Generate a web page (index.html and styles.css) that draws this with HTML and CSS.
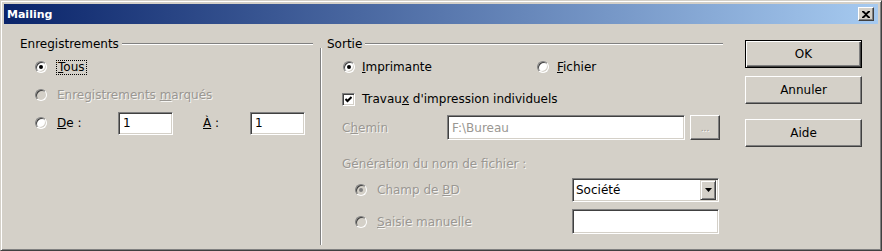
FILE: index.html
```html
<!DOCTYPE html>
<html lang="fr">
<head>
  <meta charset="UTF-8">
  <title>Mailing</title>
  <link rel="stylesheet" href="styles.css">
</head>
<body>

  <div class="window">
    <div class="titlebar">
      <span class="title">Mailing</span>
      <span class="close-btn">
        <svg width="8" height="7" viewBox="0 0 8 7"><path d="M0 0h2l2 2 2-2h2v1L5 3.5 8 6v1H6L4 5 2 7H0V6l3-2.5L0 1z" fill="#000"/></svg>
      </span>
    </div>

    <div class="dialog">

      <div class="group group-records">
        <div class="legend"><span>Enregistrements</span><span class="legend-line"></span></div>

        <div class="row row-first">
          <span class="radio checked"></span>
          <span class="focus"><u>T</u>ous</span>
        </div>
        <div class="row disabled">
          <span class="radio"></span>
          <span>Enregistrements <u>m</u>arqués</span>
        </div>
        <div class="row row-range">
          <span class="radio"></span>
          <span class="lbl-from"><u>D</u>e :</span>
          <input class="field field-range" type="text" value="1">
          <span class="lbl-to"><u>À</u> :</span>
          <input class="field field-range" type="text" value="1">
        </div>
      </div>

      <div class="vsep"></div>

      <div class="group group-output">
        <div class="legend"><span>Sortie</span><span class="legend-line"></span></div>

        <div class="row row-first">
          <span class="option-printer">
            <span class="radio checked"></span>
            <span><u>I</u>mprimante</span>
          </span>
          <span class="radio radio-file"></span>
          <span><u>F</u>ichier</span>
        </div>

        <div class="row row-check">
          <span class="checkbox">
            <svg width="7" height="7" viewBox="0 0 7 7"><path d="M0.5 3 L2.5 5 L6.5 1" stroke="#000" stroke-width="2" fill="none"/></svg>
          </span>
          <span>Travau<u>x</u> d'impression individuels</span>
        </div>

        <div class="row row-path disabled">
          <span class="lbl-path">C<u>h</u>emin</span>
          <input class="field field-path" type="text" value="F:\Bureau" disabled>
          <button class="btn btn-browse" disabled>...</button>
        </div>

        <div class="gen-label disabled">Génération du nom de fichier :</div>

        <div class="row row-db">
          <span class="radio checked"></span>
          <span class="lbl-opt disabled">Champ de <u>B</u>D</span>
          <div class="field select">
            <span class="select-text">Société</span>
            <span class="select-arrow">
              <svg width="7" height="4" viewBox="0 0 7 4"><path d="M0 0h7L3.5 4z" fill="#000"/></svg>
            </span>
          </div>
        </div>

        <div class="row row-manual">
          <span class="radio"></span>
          <span class="lbl-opt disabled"><u>S</u>aisie manuelle</span>
          <input class="field field-manual" type="text" value="">
        </div>
      </div>

      <div class="buttons">
        <button class="btn btn-default">OK</button>
        <button class="btn btn-cancel">Annuler</button>
        <button class="btn btn-help">Aide</button>
      </div>

    </div>
  </div>

</body>
</html>
```

FILE: styles.css
```css
* {
  box-sizing: border-box;
}

body {
  margin: 0;
  font-family: "DejaVu Sans", sans-serif;
  font-size: 12px;
  color: #000;
  background: #d4d0c8;
}

.window {
  width: 882px;
  height: 251px;
  padding: 3px;
  background: #d4d0c8;
  border: 1px solid;
  border-color: #d4d0c8 #404040 #404040 #d4d0c8;
  box-shadow: inset 1px 1px #fff, inset -1px -1px #808080;
}

/* title bar */
.titlebar {
  height: 20px;
  display: flex;
  align-items: center;
  justify-content: space-between;
  padding: 0 4px 0 3px;
  background: linear-gradient(to right, #0a246a, #a6caf0);
}

.title {
  color: #fff;
  font-weight: bold;
  font-size: 11px;
}

.close-btn {
  width: 16px;
  height: 14px;
  display: flex;
  align-items: center;
  justify-content: center;
  background: #d4d0c8;
  border: 1px solid;
  border-color: #fff #404040 #404040 #fff;
  box-shadow: inset -1px -1px #808080;
}

/* dialog body */
.dialog {
  display: flex;
  height: 223px;
}

.group {
  padding-top: 13px;
}

.group-records {
  width: 309px;
  padding-left: 16px;
}

.group-output {
  width: 396px;
}

.legend {
  display: flex;
  align-items: center;
  height: 14px;
  line-height: 14px;
}

.legend-line {
  flex: 1;
  height: 2px;
  margin-left: 3px;
  border-top: 1px solid #808080;
  border-bottom: 1px solid #fff;
}

.vsep {
  width: 2px;
  margin: 24px 5px 2px 7px;
  border-left: 1px solid #808080;
  border-right: 1px solid #fff;
}

.row {
  display: flex;
  align-items: center;
  height: 28px;
}

.row-first {
  margin-top: 2px;
}

.disabled,
.disabled u {
  color: #9a9792;
  text-shadow: 1px 1px 0 rgba(255, 255, 255, 0.8);
}

/* radio + checkbox */
.radio {
  position: relative;
  flex: none;
  width: 12px;
  height: 12px;
  border-radius: 50%;
  background: #fff;
  border: 1px solid;
  border-color: #808080 #fff #fff #808080;
  box-shadow: inset 1px 1px #404040, inset -1px -1px #d4d0c8;
}

.radio.checked::after {
  content: "";
  position: absolute;
  left: 3px;
  top: 3px;
  width: 4px;
  height: 4px;
  border-radius: 50%;
  background: #000;
}

.disabled .radio,
.row-db .radio,
.row-manual .radio {
  background: #d4d0c8;
}

.row-db .radio.checked::after {
  background: #808080;
}

.group-records .radio {
  margin: 0 10px 0 15px;
}

.focus {
  margin-left: -1px;
  padding: 0 1px;
  border: 1px dotted #000;
  line-height: 13px;
}

.checkbox {
  flex: none;
  width: 13px;
  height: 13px;
  margin: 0 7px 0 15px;
  display: flex;
  align-items: center;
  justify-content: center;
  background: #fff;
  border: 1px solid;
  border-color: #808080 #fff #fff #808080;
  box-shadow: inset 1px 1px #404040, inset -1px -1px #d4d0c8;
}

/* fields */
.field {
  height: 23px;
  padding: 0 4px;
  font: inherit;
  color: #000;
  background: #fff;
  border: 1px solid;
  border-color: #808080 #fff #fff #808080;
  box-shadow: inset 1px 1px #404040, inset -1px -1px #d4d0c8;
  outline: none;
}

.lbl-from {
  width: 61px;
}

.field-range {
  width: 55px;
}

.lbl-to {
  width: 47px;
  margin-left: 30px;
}

/* output group */
.option-printer {
  display: flex;
  align-items: center;
  width: 194px;
  margin-left: 16px;
}

.option-printer .radio {
  margin-right: 7px;
}

.radio-file {
  margin-right: 8px;
}

.row-check {
  height: 24px;
  margin-top: 6px;
}

.row-path {
  height: 25px;
  margin-top: 4px;
}

.lbl-path {
  width: 105px;
  margin-left: 15px;
}

.field-path {
  width: 238px;
  height: 25px;
  color: #9a9792;
}

.gen-label {
  margin: 17px 0 0 15px;
  line-height: 14px;
}

.row-db {
  height: 24px;
  margin-top: 7px;
}

.row-manual {
  height: 25px;
  margin-top: 7px;
}

.row-db .radio,
.row-manual .radio {
  margin: 0 10px 0 28px;
}

.lbl-opt {
  width: 195px;
}

.select {
  width: 147px;
  height: 24px;
  padding: 2px;
  display: flex;
  align-items: center;
}

.select-text {
  flex: 1;
  padding-left: 1px;
}

.select-arrow {
  width: 16px;
  height: 20px;
  display: flex;
  align-items: center;
  justify-content: center;
  background: #d4d0c8;
  border: 1px solid;
  border-color: #d4d0c8 #404040 #404040 #d4d0c8;
  box-shadow: inset 1px 1px #fff, inset -1px -1px #808080;
}

.field-manual {
  width: 147px;
  height: 25px;
}

/* buttons */
.btn {
  font: inherit;
  color: #000;
  background: #d4d0c8;
  border: 1px solid;
  border-color: #fff #404040 #404040 #fff;
  box-shadow: inset -1px -1px #808080;
  padding: 0;
}

.btn-browse {
  width: 30px;
  height: 25px;
  margin-left: 5px;
  font-size: 9px;
  color: #9a9792;
  text-shadow: 1px 1px 0 #fff;
}

.buttons {
  display: flex;
  flex-direction: column;
  width: 117px;
  margin-left: 22px;
  padding-top: 16px;
}

.buttons .btn {
  height: 28px;
}

.btn-default {
  border-color: #000;
  box-shadow: inset 1px 1px #fff, inset -1px -1px #404040, inset -2px -2px #808080;
}

.btn-cancel {
  margin-top: 8px;
}

.btn-help {
  margin-top: 15px;
}
```
